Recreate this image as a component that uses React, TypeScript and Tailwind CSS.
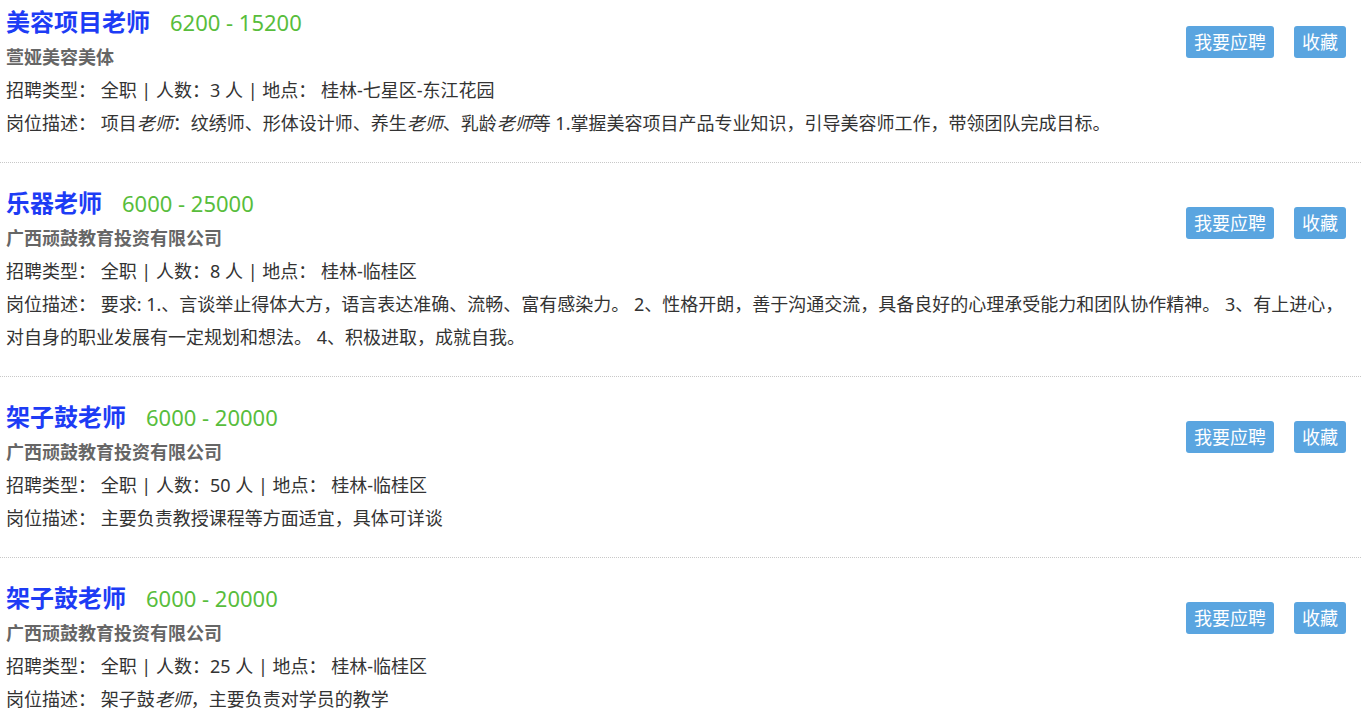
import React from "react";

type Job = {
    title: string;
    salary: string;
    company: string;
    type: string;
    count: number;
    place: string;
    desc: React.ReactNode;
};

const jobs: Job[] = [
    {
        title: "美容项目老师",
        salary: "6200 - 15200",
        company: "萱娅美容美体",
        type: "全职",
        count: 3,
        place: "桂林-七星区-东江花园",
        desc: (
            <>
                项目<em>老师</em>：纹绣师、形体设计师、养生<em>老师</em>、乳龄<em>老师</em>等 1.掌握美容项目产品专业知识，引导美容师工作，带领团队完成目标。
            </>
        ),
    },
    {
        title: "乐器老师",
        salary: "6000 - 25000",
        company: "广西顽鼓教育投资有限公司",
        type: "全职",
        count: 8,
        place: "桂林-临桂区",
        desc: (
            <>
                要求: 1.、言谈举止得体大方，语言表达准确、流畅、富有感染力。 2、性格开朗，善于沟通交流，具备良好的心理承受能力和团队协作精神。 3、有上进心，对自身的职业发展有一定规划和想法。 4、积极进取，成就自我。
            </>
        ),
    },
    {
        title: "架子鼓老师",
        salary: "6000 - 20000",
        company: "广西顽鼓教育投资有限公司",
        type: "全职",
        count: 50,
        place: "桂林-临桂区",
        desc: <>主要负责教授课程等方面适宜，具体可详谈</>,
    },
    {
        title: "架子鼓老师",
        salary: "6000 - 20000",
        company: "广西顽鼓教育投资有限公司",
        type: "全职",
        count: 25,
        place: "桂林-临桂区",
        desc: (
            <>
                架子鼓<em>老师</em>，主要负责对学员的教学
            </>
        ),
    },
];

function JobItem({ job }: { job: Job }) {
    return (
        <div className="px-[6px] pt-[21px] pb-[22px] first:pt-[3px] border-b border-dotted border-[#c8c8c8]">
            <div className="flex items-start justify-between">
                <div>
                    {/* Title + salary */}
                    <div className="flex items-center h-[38px]">
                        <span className="text-[24px] font-bold text-[#1d3cf5] leading-[38px]">{job.title}</span>
                        <span className="ml-[20px] text-[22px] text-[#58bd3c] leading-[38px]">{job.salary}</span>
                    </div>
                    <div className="text-[18px] font-bold text-[#666666] leading-[33px]">{job.company}</div>
                    <div className="text-[18px] text-[#333333] leading-[33px]">
                        招聘类型： {job.type} | 人数：{job.count} 人 | 地点： {job.place}
                    </div>
                </div>
                <div className="flex gap-[20px] mt-[23px] mr-[9px]">
                    <button className="h-[32px] px-[8px] rounded-[3px] bg-[#5aa5e0] text-white text-[18px] leading-[32px]">
                        我要应聘
                    </button>
                    <button className="h-[32px] px-[8px] rounded-[3px] bg-[#5aa5e0] text-white text-[18px] leading-[32px]">
                        收藏
                    </button>
                </div>
            </div>
            <div className="text-[18px] text-[#333333] leading-[33px]">
                岗位描述： {job.desc}
            </div>
        </div>
    );
}

export default function App() {
    return (
        <div className="w-[1361px] bg-white font-['Noto_Sans','Noto_Sans_CJK_SC',sans-serif]">
            {jobs.map((job, i) => (
                <JobItem key={i} job={job} />
            ))}
        </div>
    );
}
